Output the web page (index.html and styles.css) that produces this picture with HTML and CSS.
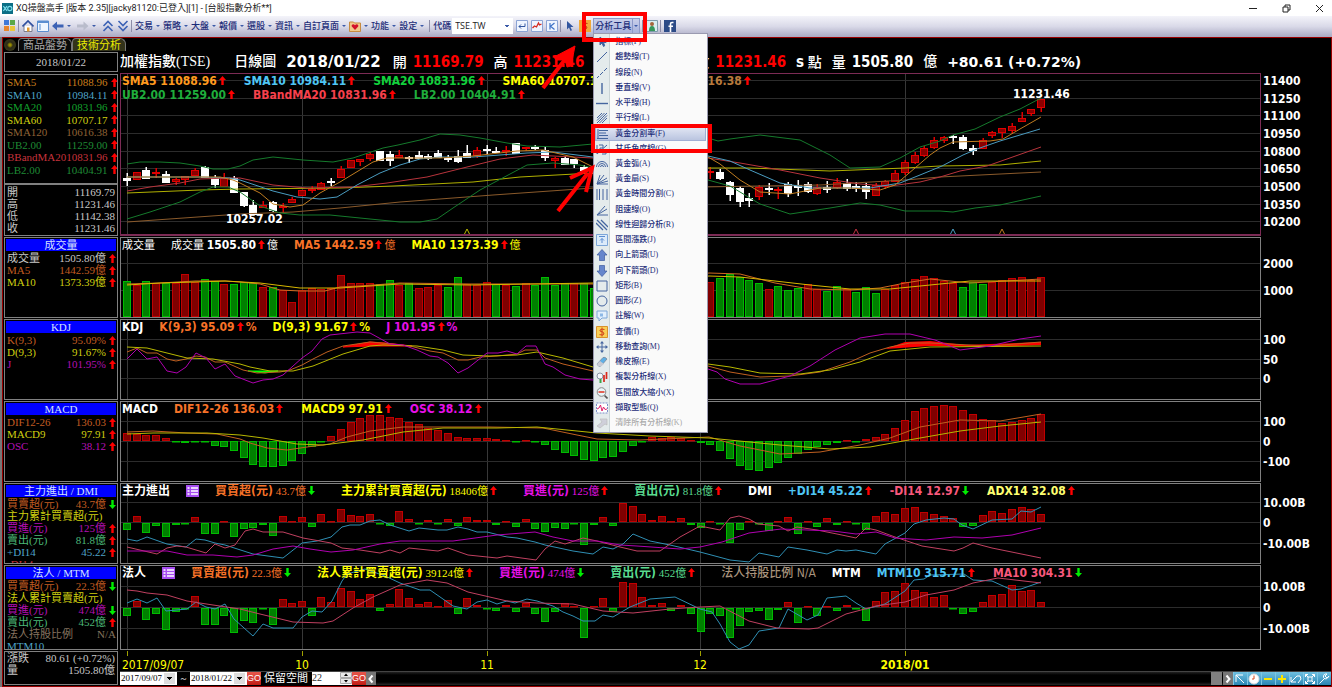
FILE: index.html
```html
<!DOCTYPE html>
<html lang="zh-Hant">
<head>
<meta charset="utf-8">
<title>XQ操盤高手</title>
<link rel="stylesheet" href="styles.css">
</head>
<body>
<svg class="defs" aria-hidden="true">
  <symbol id="up" viewBox="0 0 7 9"><path d="M3.500 0L7 4H4.700V9H2.300V4H0Z" fill="#f00"/></symbol>
  <symbol id="down" viewBox="0 0 7 9"><path d="M3.500 9L7 5H4.700V0H2.300V5H0Z" fill="#0e0"/></symbol>
  <symbol id="list" viewBox="0 0 13 12"><rect width="13" height="12" fill="#a64df0"/><path d="M1.500 3h2M1.500 6h2M1.500 9h2M5 3h7M5 6h7M5 9h7" stroke="#fff" stroke-width="1.300"/></symbol>
</svg>

<header class="titlebar">
  <svg class="logo" viewBox="0 0 12 12"><rect width="12" height="12" fill="#0c6f86"/><path d="M1.500 3.500l4 5m0-5l-4 5" stroke="#7fe0ee" stroke-width="1.200"/><circle cx="8.500" cy="6" r="2.300" fill="none" stroke="#7fe0ee" stroke-width="1.200"/></svg>
  <h1>XQ操盤高手 [版本 2.35][jacky81120:已登入][1] - [台股指數分析**]</h1>
  <div class="window-buttons">
    <button aria-label="最小化"><svg viewBox="0 0 9 9"><path d="M0 4.500h8"/></svg></button>
    <button aria-label="還原"><svg viewBox="0 0 9 9"><path d="M1 3h5v5H1zM3 3V1h5v5H6"/></svg></button>
    <button aria-label="關閉"><svg viewBox="0 0 9 9"><path d="M1 1l7 7M8 1L1 8"/></svg></button>
  </div>
</header>

<nav class="toolbar">
  <button aria-label="版面"><svg viewBox="0 0 12 12"><path fill="#3f78d8" d="M0 0h5v5H0z"/><path fill="#5aa84a" d="M6 0h5v5H6z"/><path fill="#e8842c" d="M0 6h5v5H0z"/><path fill="#e9c63c" d="M6 6h5v5H6z"/></svg></button>
  <i class="sep"></i>
  <button aria-label="首頁"><svg viewBox="0 0 12 12"><path d="M2 6v5.500h8V6" fill="#fff" stroke="#7b7b8c"/><path d="M.5 6.500L6 1l5.500 5.500" fill="none" stroke="#2f4f9f" stroke-width="1.700"/><path d="M5 7.500h2.500v4H5z" fill="#e59a2d"/></svg></button>
  <button class="gap-left" aria-label="頁面"><svg viewBox="0 0 12 12"><path d="M.5 1h11v10.500H.5z" fill="#eef6ff" stroke="#5b8ed0"/><path d="M.5 1h11v2H.5z" fill="#5b8ed0"/><path d="M2 5h2M2 7h2M2 9h2" stroke="#5b8ed0"/></svg></button>
  <button class="gap-left" aria-label="上一頁"><svg viewBox="0 0 12 12"><path d="M0 6l5-4.500V4.500h6.500v3H5v3z" fill="#3d62b5"/></svg><i class="caret"></i></button>
  <button class="gap-left" aria-label="下一頁"><svg viewBox="0 0 12 12"><path d="M11.500 6l-5-4.500V4.500H0v3h6.500v3z" fill="#b9bccb"/></svg><i class="caret"></i></button>
  <button class="gap-left" aria-label="向上"><svg viewBox="0 0 12 12"><path d="M1.500 6L6 1.500 10.500 6M1.500 11L6 6.500l4.500 4.500" fill="none" stroke="#3d62b5" stroke-width="1.600"/></svg></button>
  <button class="gap-left" aria-label="向下"><svg viewBox="0 0 12 12"><path d="M1.500 1L6 5.500 10.500 1M1.500 6L6 10.500 10.500 6" fill="none" stroke="#3d62b5" stroke-width="1.600"/></svg></button>
  <i class="sep"></i>
  <button>交易<i class="caret"></i></button><button>策略<i class="caret"></i></button><button>大盤<i class="caret"></i></button><button>報價<i class="caret"></i></button><button>選股<i class="caret"></i></button><button>資訊<i class="caret"></i></button><button>自訂頁面<i class="caret"></i></button>
  <button aria-label="最愛"><svg viewBox="0 0 12 12"><path d="M.5 2h4l1 1h6v8.500H.5z" fill="#f0c98a" stroke="#c78b3f"/><path d="M6 10L2.800 6.500c-.8-1.500 1.500-3.300 3.200-1.200C7.700 3.200 10 5 9.200 6.500z" fill="#d3122a"/></svg><i class="caret"></i></button>
  <button>功能<i class="caret"></i></button><button>設定<i class="caret"></i></button>
  <i class="sep"></i>
  <label for="symbol">代碼</label>
  <select id="symbol"><option>TSE.TW</option></select>
  <button class="gap-left" aria-label="輸入"><svg viewBox="0 0 12 12"><path d="M.5 .5h11v11H.5z" fill="#eff5ff" stroke="#8ba3d4"/><path d="M9 3.500v3H3M5 4.500l-2 2 2 2" fill="none" stroke="#31559f"/></svg></button>
  <button class="gap-left" aria-label="走勢"><svg viewBox="0 0 12 12"><path d="M.5 .5h11v11H.5z" fill="#eff5ff" stroke="#8ba3d4"/><path d="M1.500 8l2-2 2 1 2-4 1 2 2-1" fill="none" stroke="#d42a20" stroke-width="1.300"/></svg></button>
  <button class="gap-left" aria-label="K 線"><svg viewBox="0 0 12 12"><path d="M.5 .5h11v11H.5z" fill="#eff5ff" stroke="#8ba3d4"/><path d="M4 3v6.500M8.500 3L4.500 6.300l4 3.200" fill="none" stroke="#3f73c8" stroke-width="1.200"/></svg></button>
  <i class="sep"></i>
  <button aria-label="指標"><svg viewBox="0 0 12 12"><path d="M3 1v8.500l2-2 1.500 3.500 1.500-.7L6.500 7H9.500z" fill="#31559f"/></svg></button>
  <button class="gap-left" aria-label="查價"><svg viewBox="0 0 12 12"><rect width="12" height="12" fill="#f0a83a"/><path d="M8.500 3.500Q3.500 2.500 4 5q4.500 1 4 3-1 1.700-4.500.6M6 1.500v9" fill="none" stroke="#c03a10"/></svg></button>
  <div class="tools">
    <button class="tools-button" aria-haspopup="menu" aria-expanded="true">分析工具<span class="split"><i class="caret"></i></span></button>
    <ul class="menu">
      <li><button><svg viewBox="0 0 12 12"><path d="M4 1v8l2-2 1.500 3.500 1.200-.7L7.500 6.500h2.700z" fill="#31559f"/></svg>指標(P)</button></li>
      <li><button><svg viewBox="0 0 12 12"><path d="M1 11L11 1"/></svg>趨勢線(T)</button></li>
      <li><button><svg viewBox="0 0 12 12"><path d="M1 11l2-2m1-1l3-3m1-1l3-3" /></svg>線段(N)</button></li>
      <li><button><svg viewBox="0 0 12 12"><path d="M6 1v11" stroke-width="1.400"/></svg>垂直線(V)</button></li>
      <li><button><svg viewBox="0 0 12 12"><path d="M0 6.500h12" stroke-width="1.400"/></svg>水平線(H)</button></li>
      <li><button><svg viewBox="0 0 12 12"><path d="M1 6l5-5M1 11L11 1M6 11l5-5M1 8.500L8.500 1M3.500 11L11 3.500"/></svg>平行線(L)</button></li>
      <li class="selected"><button><svg viewBox="0 0 12 12"><path d="M2 1v10M3 2.500h9M3 5h7M3 7.500h9M1 10.500h11"/></svg>黃金分割率(F)</button></li>
      <li><button><svg viewBox="0 0 12 12"><path d="M1 2v9M1 11L11 2M3 2h4v3H4v3h3M6 11h4V8"/></svg>甘氏角度線(G)</button></li>
      <li><button><svg viewBox="0 0 12 12"><path d="M.5 9a5.500 5.500 0 0 1 11 0M2.500 9a3.500 3.500 0 0 1 7 0M4.500 9a1.500 1.500 0 0 1 3 0"/></svg>黃金弧(A)</button></li>
      <li><button><svg viewBox="0 0 12 12"><path d="M1 11L4 2M1 11l7-9M1 11l10-6M1 11h11M1 11l11-3"/></svg>黃金扇(S)</button></li>
      <li><button><svg viewBox="0 0 12 12"><path d="M1 1v11M3.500 1v11M7 1v11M11 1v11"/></svg>黃金時間分割(C)</button></li>
      <li><button><svg viewBox="0 0 12 12"><path d="M1 11l8-9M1 11l10-6M1 11h11"/></svg>阻速線(O)</button></li>
      <li><button><svg viewBox="0 0 12 12"><path d="M0 4l7 7M1 1l10 10M5 1l7 7" stroke-width="1.300"/></svg>線性迴歸分析(R)</button></li>
      <li><button><svg viewBox="0 0 12 12"><path d="M.5 .5h11v11H.5z" fill="#dcebfa" stroke="#7da6d8"/><path d="M3 2.500h6M6 9V4.500M4 6.500l2-2 2 2" stroke="#5a8cd0"/></svg>區間漲跌(J)</button></li>
      <li><button><svg viewBox="0 0 12 12"><path d="M6 .5L11 6H8.500v5.500h-5V6H1z" fill="#6686cc" stroke="#3d5a9e" stroke-width=".7"/></svg>向上箭頭(U)</button></li>
      <li><button><svg viewBox="0 0 12 12"><path d="M6 11.500L11 6H8.500V.5h-5V6H1z" fill="#6686cc" stroke="#3d5a9e" stroke-width=".7"/></svg>向下箭頭(D)</button></li>
      <li><button><svg viewBox="0 0 12 12"><path d="M1 1h10v10H1z"/></svg>矩形(B)</button></li>
      <li><button><svg viewBox="0 0 12 12"><circle cx="6" cy="6" r="5"/></svg>圓形(Z)</button></li>
      <li><button><svg viewBox="0 0 12 12"><path d="M1 1h10v7H6l-3 3V8H1z" fill="#e2effc" stroke="#7da6d8"/><path d="M4 3.500h3v3H4z" fill="#8db8e6" stroke="none"/></svg>註解(W)</button></li>
      <li><button><svg viewBox="0 0 12 12"><path d="M.5 .5h11v11H.5z" fill="#f9cf55" stroke="#d8922c"/><path d="M8.500 3.500Q3.500 2.500 4 5q4.500 1 4 3-1 1.700-4.500.6M6 1.500v9" stroke="#d0401a"/></svg>查價(I)</button></li>
      <li><button><svg viewBox="0 0 12 12"><path d="M6 1v10M1 6h10"/><path d="M6 0l2 2.500H4zM6 12L4 9.500h4zM0 6l2.500-2v4zM12 6L9.500 8V4z" fill="#45659f" stroke="none"/></svg>移動查詢(M)</button></li>
      <li><button><svg viewBox="0 0 12 12"><path d="M1 8l6-6.500q2-1 4 1.500L5 10q-2.500 1.500-4-2z" fill="#5fb0e6" stroke="#7a8798" stroke-width=".8"/><path d="M4 5l4 3-3 2.500Q2 11 1 8z" fill="#c9cbd3" stroke="none"/></svg>橡皮擦(E)</button></li>
      <li><button><svg viewBox="0 0 12 12"><circle cx="4" cy="5" r="3" fill="#f5f7fb" stroke="#8a94a6"/><path d="M3.500 8h2v4h-2z" fill="#3da24a" stroke="none"/><path d="M8 4v7M10.500 1v7" stroke="#d8281c" stroke-width="1.700"/></svg>複製分析線(X)</button></li>
      <li><button><svg viewBox="0 0 12 12"><circle cx="5.500" cy="5" r="4.300" fill="#e7f6fa" stroke="#888"/><path d="M8.500 8.500l3 3" stroke="#555" stroke-width="1.600"/><path d="M2.500 5h6" stroke="#e0301e" stroke-width="1.500"/></svg>區間放大縮小(X)</button></li>
      <li><button><svg viewBox="0 0 12 12"><path d="M.5 1h11v10H.5z" fill="#fff" stroke="#7d8fc8" stroke-dasharray="2 1"/><path d="M1 7l2-1 1.500-3 1.500 6L7.500 5 9 7.500l2-.5" stroke="#e0206a"/></svg>擷取型態(Q)</button></li>
      <li class="disabled"><button disabled><svg viewBox="0 0 12 12"><path d="M1 9l5-4-2-3h7v6L9 7l-5 4z" fill="#cfcfda" stroke="#bbb" stroke-width=".7"/></svg>清除所有分析線(K)</button></li>
    </ul>
  </div>
  <i class="sep"></i>
  <button aria-label="使用者"><svg viewBox="0 0 12 12"><path d="M.5 .5h11v11H.5z" fill="#d9eef0" stroke="#7e9cab"/><circle cx="6" cy="4" r="2" fill="#a5653a"/><path d="M3 11q0-5 3-5t3 5z" fill="#36965a"/></svg></button>
  <i class="sep"></i>
  <button aria-label="Facebook"><svg viewBox="0 0 12 12"><rect width="12" height="12" fill="#2c4b87"/><path d="M9.500 2.500H8Q6.500 2.500 6.500 4v8M4.500 6.300H9" fill="none" stroke="#fff" stroke-width="1.600"/></svg></button>
</nav>

<main class="workspace">
  <div class="tabs">
    <button class="round" aria-label="分頁選單"></button>
    <button class="tab">商品盤勢</button>
    <button class="tab active">技術分析</button>
  </div>

  <section class="side date">2018/01/22</section>
  <header class="quote">
    <span class="name">加權指數(TSE)</span><span class="period">日線圖</span><b class="day">2018/01/22</b>
    <span>開<b class="red">11169.79</b></span><span>高<b class="red">11231.46</b></span><span>低<b class="red">11142.38</b></span><span>收<b class="red">11231.46</b></span>
    <span><b class="flush">s</b> 點</span><span>量<b>1505.80</b></span><span>億</span><b class="change">+80.61 (+0.72%)</b>
  </header>

  <div class="side-stack">
    <section class="side">
      <dl class="averages">
        <div class="c-orange"><dt>SMA5</dt><dd>11088.96<svg><use href="#up"/></svg></dd></div>
        <div class="c-blue"><dt>SMA10</dt><dd>10984.11<svg><use href="#up"/></svg></dd></div>
        <div class="c-green"><dt>SMA20</dt><dd>10831.96<svg><use href="#up"/></svg></dd></div>
        <div class="c-yellow"><dt>SMA60</dt><dd>10707.17<svg><use href="#up"/></svg></dd></div>
        <div class="c-brown"><dt>SMA120</dt><dd>10616.38<svg><use href="#up"/></svg></dd></div>
        <div class="c-forest"><dt>UB2.00</dt><dd>11259.00<svg><use href="#up"/></svg></dd></div>
        <div class="c-crimson"><dt>BBandMA20</dt><dd>10831.96<svg><use href="#up"/></svg></dd></div>
        <div class="c-forest"><dt>LB2.00</dt><dd>10404.91<svg><use href="#up"/></svg></dd></div>
      </dl>
    </section>
    <section class="side">
      <dl class="plain"><div><dt>開</dt><dd>11169.79</dd></div><div><dt>高</dt><dd>11231.46</dd></div><div><dt>低</dt><dd>11142.38</dd></div><div><dt>收</dt><dd>11231.46</dd></div></dl>
    </section>
  </div>
  <figure class="chart price" data-chart="price"><svg class="plot"></svg><figcaption>
    <div><b class="t-orange">SMA5 11088.96<svg><use href="#up"/></svg></b><b class="t-blue">SMA10 10984.11<svg><use href="#up"/></svg></b><b class="t-green">SMA20 10831.96<svg><use href="#up"/></svg></b><b class="t-yellow">SMA60 10707.17<svg><use href="#up"/></svg></b><b class="t-brown">SMA120 10616.38<svg><use href="#up"/></svg></b></div>
    <div><b class="t-forest">UB2.00 11259.00<svg><use href="#up"/></svg></b><b class="t-crimson">BBandMA20 10831.96<svg><use href="#up"/></svg></b><b class="t-forest">LB2.00 10404.91<svg><use href="#up"/></svg></b></div>
  </figcaption><svg class="scale"></svg></figure>

  <section class="side"><h2>成交量</h2>
    <dl><div><dt>成交量</dt><dd>1505.80億<svg><use href="#up"/></svg></dd></div><div class="c-rust"><dt>MA5</dt><dd>1442.59億<svg><use href="#up"/></svg></dd></div><div class="c-yellow"><dt>MA10</dt><dd>1373.39億<svg><use href="#up"/></svg></dd></div></dl>
  </section>
  <figure class="chart" data-chart="volume"><svg class="plot"></svg><figcaption>
    <div><span>成交量</span><span>成交量 <b>1505.80</b><svg><use href="#up"/></svg>億</span><span class="t-rust"><b>MA5 1442.59</b><svg><use href="#up"/></svg>億</span><span class="t-yellow"><b>MA10 1373.39</b><svg><use href="#up"/></svg>億</span></div>
  </figcaption><svg class="scale"></svg></figure>

  <section class="side"><h2>KDJ</h2>
    <dl><div class="c-rust"><dt>K(9,3)</dt><dd>95.09%<svg><use href="#up"/></svg></dd></div><div class="c-yellow"><dt>D(9,3)</dt><dd>91.67%<svg><use href="#up"/></svg></dd></div><div class="c-purple"><dt>J</dt><dd>101.95%<svg><use href="#up"/></svg></dd></div></dl>
  </section>
  <figure class="chart" data-chart="kdj"><svg class="plot"></svg><figcaption>
    <div><b>KDJ</b><b class="t-rust">K(9,3) 95.09<svg><use href="#up"/></svg>%</b><b class="t-yellow">D(9,3) 91.67<svg><use href="#up"/></svg>%</b><b class="t-purple">J 101.95<svg><use href="#up"/></svg>%</b></div>
  </figcaption><svg class="scale"></svg></figure>

  <section class="side"><h2>MACD</h2>
    <dl><div class="c-rust"><dt>DIF12-26</dt><dd>136.03<svg><use href="#up"/></svg></dd></div><div class="c-yellow"><dt>MACD9</dt><dd>97.91<svg><use href="#up"/></svg></dd></div><div class="c-purple"><dt>OSC</dt><dd>38.12<svg><use href="#up"/></svg></dd></div></dl>
  </section>
  <figure class="chart" data-chart="macd"><svg class="plot"></svg><figcaption>
    <div><b>MACD</b><b class="t-rust">DIF12-26 136.03<svg><use href="#up"/></svg></b><b class="t-yellow">MACD9 97.91<svg><use href="#up"/></svg></b><b class="t-purple">OSC 38.12<svg><use href="#up"/></svg></b></div>
  </figcaption><svg class="scale"></svg></figure>

  <section class="side"><h2>主力進出 / DMI</h2>
    <dl><div class="c-rust"><dt>買賣超(元)</dt><dd>43.7億<svg><use href="#down"/></svg></dd></div><div class="c-yellow"><dt>主力累計買賣超(元)</dt></div><div class="c-purple"><dt>買進(元)</dt><dd>125億<svg><use href="#up"/></svg></dd></div><div class="c-mint"><dt>賣出(元)</dt><dd>81.8億<svg><use href="#up"/></svg></dd></div><div class="c-blue"><dt>+DI14</dt><dd>45.22<svg><use href="#up"/></svg></dd></div><div class="c-crimson"><dt>-DI14</dt></div></dl>
  </section>
  <figure class="chart cjk" data-chart="dmi"><svg class="plot"></svg><figcaption>
    <div><b>主力進出</b><svg class="list"><use href="#list"/></svg><span class="t-rust"><b>買賣超(元)</b> 43.7億<svg><use href="#down"/></svg></span><span class="t-yellow wide"><b>主力累計買賣超(元)</b> 18406億<svg><use href="#up"/></svg></span><span class="t-purple wide"><b>買進(元)</b> 125億<svg><use href="#up"/></svg></span><span class="t-mint wide"><b>賣出(元)</b> 81.8億<svg><use href="#up"/></svg></span><b class="wide">DMI</b><b class="t-blue">+DI14 45.22<svg><use href="#up"/></svg></b><b class="t-pink">-DI14 12.97<svg><use href="#down"/></svg></b><b class="t-lemon">ADX14 32.08<svg><use href="#up"/></svg></b></div>
  </figcaption><svg class="scale"></svg></figure>

  <section class="side"><h2>法人 / MTM</h2>
    <dl><div class="c-rust"><dt>買賣超(元)</dt><dd>22.3億<svg><use href="#down"/></svg></dd></div><div class="c-yellow"><dt>法人累計買賣超(元)</dt></div><div class="c-purple"><dt>買進(元)</dt><dd>474億<svg><use href="#down"/></svg></dd></div><div class="c-mint"><dt>賣出(元)</dt><dd>452億<svg><use href="#up"/></svg></dd></div><div class="c-tan"><dt>法人持股比例</dt><dd>N/A</dd></div><div class="c-blue"><dt>MTM10</dt></div></dl>
  </section>
  <figure class="chart cjk tall" data-chart="mtm"><svg class="plot"></svg><figcaption>
    <div><b>法人</b><svg class="list"><use href="#list"/></svg><span class="t-rust"><b>買賣超(元)</b> 22.3億<svg><use href="#down"/></svg></span><span class="t-yellow wide"><b>法人累計買賣超(元)</b> 39124億<svg><use href="#up"/></svg></span><span class="t-purple wide"><b>買進(元)</b> 474億<svg><use href="#down"/></svg></span><span class="t-mint wide"><b>賣出(元)</b> 452億<svg><use href="#up"/></svg></span><b class="t-tan wide">法人持股比例 N/A</b><b>MTM</b><b class="t-blue">MTM10 315.71<svg><use href="#up"/></svg></b><b class="t-pink">MA10 304.31<svg><use href="#down"/></svg></b></div>
  </figcaption><svg class="scale"></svg></figure>

  <section class="side last"><dl class="plain"><div><dt>漲跌</dt><dd>80.61 (+0.72%)</dd></div><div><dt>量</dt><dd>1505.80億</dd></div></dl></section>
  <footer class="foot">
    <svg class="dates"></svg>
    <form class="range">
      <select aria-label="起始日期"><option>2017/09/07</option></select><span class="tilde">~</span><select aria-label="結束日期"><option>2018/01/22</option></select><button type="button" class="go">GO</button>
      <label for="room">保留空間</label><span class="spin"><input id="room" value="22"><svg viewBox="0 0 12 12"><path d="M.5 .5h11v5H.5zM.5 6.500h11v5H.5z" fill="#e8e8e8" stroke="#aaa"/><path d="M6 1.500L8 4H4zM6 10.500L8 8H4z" fill="#000"/></svg></span><button type="button" class="go">GO</button>
      <button type="button" class="step" aria-label="向左捲動"><svg viewBox="0 0 10 12"><path d="M6.500 2.500L3.500 6l3 3.500"/></svg></button>
      <span class="track"><i></i></span>
      <button type="button" class="step" aria-label="向右捲動"><svg viewBox="0 0 10 12"><path d="M3.500 2.500l3 3.500-3 3.500"/></svg></button>
      <button type="button" class="blue" aria-label="選取"><svg viewBox="0 0 12 12"><path d="M2 9V2h7M2 2l8 8"/></svg></button>
      <button type="button" class="blue" aria-label="時間"><svg viewBox="0 0 12 12"><circle cx="6" cy="6" r="5" fill="#fff" stroke="#ddd"/><path d="M6 2.500V6H4" stroke="#d64a1c"/></svg></button>
      <button type="button" class="blue gold" aria-label="縮小"><svg viewBox="0 0 12 12"><path d="M2 6h8"/></svg></button>
      <button type="button" class="blue gold" aria-label="放大"><svg viewBox="0 0 12 12"><path d="M2 6h8M6 2v8"/></svg></button>
      <button type="button" class="blue" aria-label="復原"><svg viewBox="0 0 12 12"><path d="M1 4v5h5M1 9l6-6h3l1 3-3 4"/></svg></button>
      <button type="button" class="blue" aria-label="全螢幕"><svg viewBox="0 0 12 12"><path d="M4 4h4v4H4zM1.500 1.500L4 4M10.500 1.500L8 4M1.500 10.500L4 8M10.500 10.500L8 8M1.500 4V1.500H4M8 1.500h2.500V4M10.500 8v2.500H8M4 10.500H1.500V8"/></svg></button>
      <button type="button" class="blue" aria-label="設定"><svg viewBox="0 0 12 12"><path d="M1.500 10.500L7 5M11 3L9 5 7 3l2-2q-4-.5-3.500 3.500Q8 8 11 3z"/></svg></button>
    </form>
  </footer>
</main>

<svg class="marks" aria-hidden="true">
  <rect x="584" y="14" width="61" height="26"/>
  <rect x="593" y="126" width="117" height="25"/>
  <path d="M543 88L567 57"/><path class="head" d="M575 46L554 57L556 60L562 60L566 63L567 67L571 66Z"/>
  <path d="M558 211L588 173"/><path d="M570 178L592 168L586 192"/>
</svg>
<script src="charts.js"></script>
</body>
</html>
```
FILE: styles.css
```css
* { box-sizing: border-box; }
body { margin: 0; min-height: 100vh; background: #000; color: #fff; font-family: "Liberation Serif", "Noto Sans CJK TC", serif; font-size: 11px; display: flex; flex-direction: column; overflow-x: hidden; }
button, select, input { font: inherit; color: inherit; margin: 0; padding: 0; border: 0; background: none; border-radius: 0; }
h1, h2, dl, dd, ul, figure { margin: 0; padding: 0; font-weight: normal; }
.defs { position: absolute; width: 0; height: 0; }

.titlebar { height: 16px; background: #fff; color: #222; display: flex; align-items: center; padding: 0 8px 0 2px; gap: 3px; }
.titlebar h1 { font: 9px/16px Roboto, "Noto Sans CJK TC", sans-serif; }
.logo { width: 11px; height: 11px; }
.window-buttons { margin-left: auto; display: flex; gap: 24px; }
.window-buttons button { display: flex; }
.window-buttons svg { width: 9px; height: 9px; fill: none; stroke: #222; }

.toolbar { height: 21px; background: linear-gradient(#f4f4fa, #d9d9e8 50%, #a9a9c2); color: #1c2c78; font: 500 9px/12px "Liberation Sans", "Noto Sans CJK TC", sans-serif; display: flex; align-items: center; padding: 0 4px 2px; white-space: nowrap; }
.toolbar > button { display: flex; align-items: center; }
.toolbar > button > svg { width: 12px; height: 12px; }
.toolbar .gap-left { margin-left: 3px; }
.caret { width: 0; height: 0; border: 2px solid transparent; border-top-color: #3b5aa8; border-bottom: 0; margin: 0 3px; }
.sep { width: 1px; height: 12px; background: #8d8da8; margin: 0 3px 0 2px; }
#symbol { width: 61px; height: 16px; margin-left: 1px; padding-left: 3px; background: #fff; color: #222; font: 9px/16px "Open Sans", sans-serif; appearance: none; background-image: linear-gradient(45deg, transparent 50%, #3b5aa8 50%), linear-gradient(-45deg, transparent 50%, #3b5aa8 50%); background-size: 2px 2px; background-position: 53px 7px, 55px 7px; background-repeat: no-repeat; }
.tools { position: relative; margin-left: 2px; }
.tools-button { display: flex; align-items: center; height: 16px; padding-left: 1px; background: linear-gradient(#c9cfea, #a7b2dc); border: 1px solid #8c99c9; }
.split { border-left: 1px solid #8c99c9; height: 14px; display: flex; align-items: center; margin-left: 1px; }
.split .caret { margin: 0 1px; }
.menu { position: absolute; z-index: 3; left: 0; top: 15px; width: 115px; height: 400px; padding: 1px; display: flex; flex-direction: column; list-style: none; background: linear-gradient(90deg, #e4ebec 15px, #c9d3d6 15px 16px, #fafafa 16px); border: 1px solid #9a9ab0; font: 500 8px/12px "Liberation Serif", "Noto Sans CJK TC", serif; }
.menu li { flex: 1; display: flex; }
.menu button { display: flex; align-items: center; gap: 7px; width: 100%; padding-left: 1px; color: #1c2c78; }
.menu svg { width: 12px; height: 12px; fill: none; stroke: #45659f; }
.menu .selected { background: linear-gradient(#e6eaf6, #b7c2de); outline: 1px solid #a0aed4; outline-offset: -1px; }
.menu .disabled button { color: #aaa; }

.workspace { flex: 1; display: grid; grid-template-columns: 114px minmax(0, 1fr); gap: 1px 2px; grid-auto-rows: auto; align-content: start; border: 1px solid #900; border-left-width: 1px; margin-left: 2px; padding-left: 1px; box-shadow: -2px 0 #777; }
.tabs { grid-column: 1 / -1; display: flex; align-items: end; height: 13px; }
.round { width: 12px; height: 12px; border-radius: 50%; background: radial-gradient(circle, #998e00 1px, #2c2b18 3px, #45441c); }
.tab { height: 13px; line-height: 13px; padding: 0 4px; margin-left: 2px; color: #aaa; border: 1px solid #777; border-width: 1px 1px 0; border-radius: 4px 6px 0 0; font-size: 11px; background: #0a0a0a; }
.tab.active { color: #ee0; background: #33331a; margin-left: 0; padding: 0 4px; }

.side { border: 1px solid #808080; overflow: hidden; height: 0; min-height: 100%; padding: 1px 1px 0; color: #c8c8c8; }
.side h2 { margin: 0; background: #00f; color: #d4e0ff; font-size: 11px; line-height: 12px; text-align: center; }
.side dl div { display: flex; justify-content: space-between; line-height: 12px; padding-left: 1px; white-space: nowrap; }
.side h2 + dl { padding-top: 1px; }
.side dt { flex: none; }
.side dd { display: flex; align-items: center; gap: 3px; }
.side dd svg { width: 7px; height: 9px; }
.side .averages { display: grid; grid-auto-rows: 1fr; height: 100px; }
.plain div { padding-right: 1px; }
.date { line-height: 18px; text-align: center; padding: 0; }
.side-stack { display: grid; grid-template-rows: 110px 1fr; padding-top: 1px; min-height: 0; }
.last { padding: 0 1px; }

.quote { height: 20px; display: flex; align-items: center; gap: 10px; font: 500 14px/20px "Liberation Serif", "Noto Sans CJK TC", serif; white-space: nowrap; overflow: hidden; }
.quote b { font: bold 15px/20px "DejaVu Sans Condensed", "DejaVu Sans", sans-serif; }
.quote span b { margin-left: 6px; }
.quote span .flush { margin-left: 0; }
.quote .period { margin-left: 14px; }
.quote .day { font: bold 15px/20px "DejaVu Sans", sans-serif; margin-right: 2px; }
.quote .change { font: bold 14px/20px "DejaVu Sans", sans-serif; }
.red { color: #f00; }

.chart { display: grid; grid-template-columns: minmax(0, 1fr) 70px; }
.plot { grid-area: 1 / 1; width: 100%; height: 81px; border: 1px solid #808080; overflow: hidden; }
.scale { grid-area: 1 / 2; width: 70px; height: 81px; overflow: visible; }
.price .plot, .price .scale { height: 163px; }
.price .plot { border-color: #7c2b55; border-bottom-width: 2px; }
.tall .plot, .tall .scale { height: 85px; }
.plot text, .scale text, .dates text { font: bold 12px "DejaVu Sans Condensed", "DejaVu Sans", sans-serif; fill: #fff; }
.chart figcaption { grid-area: 1 / 1; z-index: 1; padding: 1px 2px; min-width: 0; overflow: hidden; white-space: nowrap; font: 11px/14px "Liberation Serif", "Noto Sans CJK TC", serif; }
figcaption div { display: flex; align-items: center; gap: 16px; }
figcaption b { font: bold 12px/14px "DejaVu Sans Condensed", "DejaVu Sans", "Noto Sans CJK TC", sans-serif; }
figcaption svg { width: 7px; height: 9px; margin: 0 2px 0 2px; }
figcaption .list { width: 13px; height: 12px; margin: 0; flex: none; }
.wide { margin-left: 8px; }
.cjk figcaption b { font-family: "DejaVu Sans Condensed", "Noto Sans CJK TC", sans-serif; }

.c-orange { color: #c87d1c; } .c-blue { color: #4fa4c8; } .c-green { color: #12a02c; } .c-yellow { color: #cfcf10; } .c-brown { color: #8f6235; }
.c-forest { color: #1f8a35; } .c-crimson { color: #c8333c; } .c-rust { color: #c05c20; } .c-purple { color: #b410b4; } .c-mint { color: #4cb878; } .c-tan { color: #85735f; }
.t-orange { color: #ff9a1f; } .t-blue { color: #4fc6f5; } .t-green { color: #12d03c; } .t-yellow { color: #ff0; } .t-brown { color: #b87a3c; }
.t-forest { color: #1fae3c; } .t-crimson { color: #f8404c; } .t-rust { color: #f87328; } .t-purple { color: #e810e8; } .t-mint { color: #5adc90; } .t-pink { color: #f8587c; } .t-lemon { color: #ffff70; } .t-tan { color: #a8937c; }
figcaption b.t-tan { font-weight: 500; }

.foot { display: flex; flex-direction: column; min-width: 0; }
.dates { width: 100%; height: 20px; }
.dates text { fill: #ff0; }
.dates .thin { font-weight: normal; }
.range { display: flex; align-items: stretch; height: 14px; border-top: 1px solid #444; }
.range select { width: 57px; background: #fff; color: #000; font: 9px/13px "Liberation Serif", serif; padding-left: 1px; appearance: none; background-image: linear-gradient(#000, #000), linear-gradient(#000, #000), linear-gradient(#000, #000), linear-gradient(#ddd, #ddd); background-repeat: no-repeat; background-size: 5px 1px, 3px 1px, 1px 1px, 11px 11px; background-position: 47px 5px, 48px 6px, 49px 7px, 44px 1px; }
.range .tilde { width: 13px; text-align: center; line-height: 13px; }
.range label { padding: 0 4px 0 3px; line-height: 13px; }
.go { width: 14px; background: linear-gradient(#e8584c, #c01c14); color: #fff; font: 9px/13px "Liberation Sans", sans-serif; }
.spin { display: flex; background: #fff; width: 40px; }
.spin input { width: 28px; color: #333; font: 10px/10px "Liberation Serif", serif; align-self: start; height: 10px; }
.spin svg { width: 12px; height: 12px; }
.step { width: 10px; background: #777; display: flex; align-items: center; }
.step svg { width: 10px; height: 12px; fill: none; stroke: #fff; stroke-width: 2; }
.track { flex: 1; display: flex; justify-content: flex-end; background: linear-gradient(#222, #000 3px 10px, #2a2a2a); }
.track i { width: 11px; background: #808080; margin-right: 1px; }
.blue { width: 14px; background: linear-gradient(#6fc0e0, #2a86b4); border-left: 1px solid #7cc6e4; display: flex; align-items: center; }
.blue svg { width: 12px; height: 12px; fill: none; stroke: #fff; }
.gold svg { stroke: #ffe600; stroke-width: 2; }

.marks { position: absolute; z-index: 5; left: 0; top: 0; width: 720px; height: 220px; pointer-events: none; fill: none; stroke: #f00; stroke-width: 4; }
.marks .head { fill: #f00; stroke-width: 1; }
```
FILE: charts.js
```js
const NS = 'http://www.w3.org/2000/svg';
const LEFT = 121, FIRST = 127, STEP = 9.723;
const MONTHS = [127, 302, 487, 700, 905];
const xAt = i => Math.round(FIRST + i * STEP);

function add(parent, tag, attrs, text) {
  const el = document.createElementNS(NS, tag);
  for (const k in attrs) el.setAttribute(k, attrs[k]);
  if (text !== undefined) el.textContent = text;
  parent.appendChild(el);
  return el;
}

function line(g, points, color, extra) {
  add(g, 'polyline', Object.assign({ points, fill: 'none', stroke: color, 'stroke-width': 1 }, extra));
}

function bar(g, i, top, bottom, up) {
  const h = Math.max(1, bottom - top);
  add(g, 'rect', { x: xAt(i) - 3.5, y: top + 0.5, width: 7, height: Math.max(0.5, h - 1), fill: up ? '#800000' : '#008000', stroke: up ? '#c00000' : '#00bb00' });
}

// Candles: colour (r/w), high, body top, body bottom, low
const candles = `w173,178,180,185 r172,172,179,179 w167,170,178,178 r168,172,173,177 w171,174,182,182 r178,179,181,184 r176,176,179,184 r168,170,175,175 w166,167,177,177 w175,178,184,187 r173,178,186,186 w176,178,192,192
w192,192,205,206 w200,205,214,214 r201,205,207,207 w201,202,210,211 r203,206,207,212 r197,199,202,202 r190,190,195,195 r186,189,190,192 r182,183,189,189 w178,181,182,185 r166,169,177,177 r160,160,167,167 r159,159,161,165 r152,154,158,160 w151,151,160,160 w151,154,160,165 r150,155,157,157 w156,157,158,162 w151,155,158,158 w154,156,158,159 w150,153,157,157 w155,158,159,161 w150,156,161,162 w145,153,157,157 r147,150,155,157 w145,149,150,153 w147,151,152,152 r146,150,151,155 w143,143,153,153 r147,147,148,150 w145,147,148,149 w147,150,157,160 r157,158,160,167 w156,158,164,164 w159,159,163,167 w165,167,170,170 w169,170,173,173
w170,172,176,178 r168,170,174,176 r164,166,170,172 r160,162,166,168 w160,162,166,168 r156,158,162,164 w156,158,162,164 r154,156,160,162 w154,156,158,160 w156,158,164,166 w160,162,170,172 r167,171,172,178 w169,172,178,179 w181,182,194,200 w186,188,201,206 w193,198,200,206 r185,187,196,199 w183,188,189,194 r187,189,190,198 w182,184,193,196 w180,185,187,195 w182,184,191,192 r184,187,193,194 w181,187,189,192 r178,182,187,188 w179,183,188,190 w182,186,188,191 w183,186,191,198 r183,185,195,195 r180,181,186,188 r170,173,181,181 r160,162,172,174 r152,155,162,163 r146,148,155,156 r137,140,147,148 r136,137,140,142 w135,136,137,143 w135,137,148,149 w145,148,150,154 r138,140,148,148 r131,132,135,137 r128,128,132,137 r123,126,130,133 r112,118,121,121 r109,109,113,115 r99,99,107,111`.split(/\s+/);

const volumeTop = [281,285,281,283,283,283,274,282,279,281,284,284,282,283,287,287,290,302,290,288,289,288,275,283,283,283,284,280,285,283,288,287,285,287,277,284,285,282,284,285,286,283,285,277,285,283,283,283,288,284,283,285,282,284,280,283,285,284,283,282,282,278,274,277,280,283,289,286,290,288,284,289,291,286,289,292,287,293,289,285,282,279,276,278,281,283,287,282,284,282,280,278,277,280,277];
const volumeKind = 'grgrgrrrggrgggrgrrrrrrrrrrggrgrrrggrrrgrgrggggrggrgrgrggrrgrrgggggrgggrrggrgggrrrrrrrrgggrrrrrr';
const macdEnd = [433,434,435,435,438,442,443,442,442,446,447,451,458,465,467,467,466,461,454,447,442,436,429,422,418,415,415,417,418,422,424,428,430,433,437,438,438,438,439,440,442,440,442,445,450,453,456,460,461,458,457,452,446,442,437,438,437,438,440,443,445,451,459,466,470,471,468,463,458,454,450,447,445,443,440,442,439,437,434,428,420,411,408,406,405,406,410,414,419,420,423,422,420,418,414];
const dmiEnd = [531,517,534,527,538,526,525,518,535,535,522,538,530,529,526,537,517,522,518,528,515,522,510,516,517,515,525,527,512,520,525,521,525,520,527,518,521,521,526,522,528,520,530,533,529,530,525,546,526,518,527,504,507,515,521,517,522,519,526,529,522,525,544,531,522,525,532,522,518,535,522,528,519,526,522,525,531,517,513,515,509,508,513,515,517,519,528,527,516,512,514,510,508,510,515];
const mtmEnd = [617,602,621,615,631,613,610,597,626,626,617,634,622,624,610,626,600,604,602,617,598,603,589,592,600,595,612,605,590,599,605,603,607,601,615,599,606,610,612,606,613,604,615,623,613,604,607,639,607,599,613,583,584,598,606,604,612,606,615,633,615,617,639,627,613,612,621,611,603,624,607,617,607,612,606,610,622,602,593,592,584,591,593,598,596,610,615,613,603,596,595,586,592,591,603];

const charts = {
  price: {
    top: 73, height: 163,
    scale: [['11400', 80], ['11250', 98], ['11100', 115], ['10950', 133], ['10800', 151], ['10650', 168], ['10500', 186], ['10350', 204], ['10200', 221]],
    draw(g) {
      candles.forEach((c, i) => {
        const [hi, a, b, lo] = c.slice(1).split(',').map(Number);
        const red = c[0] === 'r', x = xAt(i);
        add(g, 'rect', { x: x - 0.5, y: hi, width: 1.5, height: lo - hi + 1, fill: red ? '#e00000' : '#fff' });
        add(g, 'rect', { x: x - 3.5, y: a + 0.5, width: 7, height: Math.max(0.6, b - a), fill: red ? '#8b0000' : '#fff', stroke: red ? '#e00000' : '#fff' });
      });
      line(g, '127,222 240,214 293,212 340,208 400,202 493,195 593,188 700,187 820,185 905,180 940,177 1041,172', '#8a5a2b');
      line(g, '127,193 200,190 240,189 340,188 393,186 473,182 520,177 593,173 708,168 750,168 830,171 905,168 940,166 1000,165 1041,161', '#b0b000');
      line(g, '127,164 140,162 160,162 180,163 200,166 213,169 228,169 240,166 253,160 273,157 303,160 333,162 353,158 383,148 398,145 420,140 440,134 460,135 480,138 507,143 527,146 560,147 593,144 650,135 708,138 718,141 730,139 760,135 800,140 830,155 850,168 880,167 900,158 920,147 940,141 953,135 975,129 1000,117 1020,109 1041,98', '#157a2c');
      line(g, '127,219 150,212 180,202 200,192 213,187 228,187 240,192 260,206 280,213 300,215 330,215 380,220 400,222 420,222 437,219 453,208 480,190 527,165 553,163 580,165 593,168 650,180 708,180 730,186 760,204 790,214 830,208 860,203 880,205 905,211 940,211 953,212 975,208 1000,205 1041,196', '#157a2c');
      line(g, '127,191 150,187 180,183 200,179 230,178 240,178 273,185 307,188 353,187 387,183 427,177 467,167 500,159 533,155 593,158 640,160 708,158 740,163 780,170 820,178 860,184 890,186 920,182 940,177 960,171 987,166 1007,159 1041,147', '#b8343c');
      line(g, '127,177 200,177 230,178 240,180 273,191 297,197 320,199 337,197 357,185 380,173 400,165 420,159 440,157 473,157 527,153 553,152 593,157 650,160 708,156 730,161 750,170 780,183 810,188 840,188 870,188 900,183 920,175 942,166 963,155 977,149 1000,141 1040,129', '#4a9cc0');
      line(g, '127,177 220,177 233,180 240,183 260,193 273,204 290,207 303,205 320,193 340,182 373,162 387,158 440,158 473,156 517,151 543,150 573,157 593,167 640,172 708,157 720,164 740,180 760,192 790,194 820,188 850,188 880,190 895,185 915,168 930,155 940,148 953,142 990,141 1003,139 1020,129 1041,117', '#c07d20');
      [[467, '#b8b800'], [856, '#c03040'], [953, '#4a9cc0'], [1002, '#c07d20']].forEach(([x, c]) => line(g, `${x - 3},235 ${x},229 ${x + 3},235`, c));
      add(g, 'text', { x: 226, y: 223 }, '10257.02');
      add(g, 'text', { x: 1013, y: 98 }, '11231.46');
    }
  },
  volume: {
    top: 237, height: 81, scale: [['2000', 263], ['1000', 290]],
    draw(g) {
      volumeTop.forEach((y, i) => bar(g, i, y, 317, volumeKind[i] === 'r'));
      line(g, '127,284 160,283 195,281 225,281 240,282 260,284 280,290 300,291 325,291 340,287 360,286 400,283 470,284 530,284 593,284 650,283 709,273 740,274 775,283 810,289 850,290 880,288 905,283 930,279 970,283 1041,279', '#d06a20');
      line(g, '127,285 160,283 195,282 225,281 260,283 300,288 340,288 400,284 470,285 530,284 593,283 650,282 709,276 740,277 775,281 810,285 850,289 890,289 930,285 970,281 1041,281', '#d8b800');
    }
  },
  kdj: {
    top: 319, height: 81, scale: [['100', 339], ['50', 359], ['0', 378]],
    draw(g) {
      add(g, 'polygon', { points: '343,347 370,342 385,343 412,346 370,346', fill: '#f00', stroke: '#f00' });
      add(g, 'polygon', { points: '885,349 905,342 930,341 965,345 990,344 1041,342 1041,345 990,347 930,346', fill: '#f00' });
      add(g, 'polygon', { points: '248,371 278,371 265,373', fill: '#0f0', stroke: '#0f0' });
      line(g, '127,352 137,348 147,353 157,353 167,359 176,361 186,359 196,356 205,357 215,362 225,362 243,370 257,373 280,372 290,370 302,365 313,359 327,352 343,346 370,342 393,344 410,346 430,351 443,353 458,360 468,360 480,357 497,356 517,354 525,350 537,350 545,358 563,364 593,371 650,370 708,366 730,372 760,377 790,376 820,372 850,362 870,353 890,347 910,343 930,343 990,346 1041,342', '#c06020');
      line(g, '127,347 147,348 167,353 187,358 213,359 240,364 250,367 270,371 293,371 313,366 343,354 370,346 383,345 417,346 443,350 463,355 490,356 517,355 537,352 563,358 593,367 650,368 708,364 730,367 760,373 800,374 830,370 860,362 890,351 930,347 1041,346', '#b8b800');
      line(g, '127,359 137,349 147,359 157,357 167,371 177,373 186,367 196,353 206,358 215,369 225,364 235,376 253,383 263,380 273,379 283,375 302,358 312,351 322,339 330,335 357,332 370,333 390,344 403,345 417,350 430,356 438,357 448,363 458,373 468,368 487,353 498,353 507,351 517,354 526,346 536,346 545,364 553,367 565,375 580,379 593,380 650,374 708,369 717,372 725,379 740,384 760,384 790,376 810,366 835,350 860,338 885,334 910,334 935,340 960,350 990,346 1020,339 1041,336', '#b000b0');
    }
  },
  macd: {
    top: 401, height: 82, scale: [['100', 421], ['0', 441], ['-100', 461]],
    draw(g) {
      macdEnd.forEach((y, i) => y < 441 ? bar(g, i, y, 441, true) : bar(g, i, 441, y, false));
      line(g, '127,432 153,431 187,433 217,434 240,439 250,443 267,448 287,450 307,447 330,444 347,437 370,431 403,427 443,427 490,427 543,428 577,435 597,439 640,440 709,437 740,446 780,454 820,452 860,445 890,438 920,427 960,420 1000,421 1041,414', '#c06020');
      line(g, '127,434 153,433 207,433 240,435 263,438 297,444 323,445 363,440 403,432 443,428 497,428 537,427 577,431 597,433 650,436 709,438 780,445 830,449 870,447 920,438 960,431 1000,426 1041,422', '#b8b800');
    }
  },
  dmi: {
    top: 484, height: 81, scale: [['10.00B', 503], ['0', 523], ['-10.00B', 544]],
    draw(g) {
      dmiEnd.forEach((y, i) => y < 523.5 ? bar(g, i, y, 523, true) : bar(g, i, 524, y, false));
      line(g, '127,540 137,542 147,538 167,545 186,548 196,540 205,541 215,544 225,546 253,555 283,559 302,544 317,542 331,538 342,528 350,526 360,526 370,522 380,521 390,526 409,532 419,529 438,531 447,531 458,528 468,530 477,533 487,533 507,538 517,539 535,543 545,546 573,552 593,555 603,548 613,550 623,545 633,535 650,542 670,546 700,553 730,561 749,563 759,554 779,558 788,548 807,551 827,555 837,551 846,552 856,551 876,555 885,545 905,534 914,525 926,521 944,519 954,520 962,526 973,530 992,521 1012,520 1021,512 1031,513 1041,508', '#2f8fb4');
      line(g, '127,548 157,555 167,549 177,547 186,548 206,554 215,545 225,549 235,546 245,532 253,530 263,533 283,533 303,539 331,544 342,549 360,551 380,554 390,551 400,554 409,549 428,551 438,552 448,549 468,556 497,559 507,557 536,561 545,550 555,542 565,545 583,539 597,542 620,548 637,552 660,552 680,538 700,527 710,529 720,531 730,519 739,517 749,520 758,525 779,527 788,532 797,528 817,531 837,535 856,539 866,529 876,531 895,538 922,547 954,552 963,549 973,544 992,549 1041,559', '#c04060');
      line(g, '127,552 167,552 187,556 213,556 237,558 253,556 273,550 293,547 310,550 331,553 353,551 380,545 400,542 453,542 497,536 535,533 553,538 573,542 597,542 620,546 637,547 680,550 700,548 722,543 749,534 781,530 833,532 856,535 876,533 895,539 926,541 954,538 982,539 1012,536 1041,529', '#b000b0');
    }
  },
  mtm: {
    top: 566, height: 85, scale: [['10.00B', 587], ['0', 608], ['-10.00B', 629]],
    draw(g) {
      mtmEnd.forEach((y, i) => y < 608.5 ? bar(g, i, y, 608, true) : bar(g, i, 609, y, false));
      line(g, '127,604 137,600 147,604 157,599 166,612 187,610 196,603 206,608 215,610 225,605 234,620 253,637 263,625 273,629 293,629 302,618 312,612 322,613 332,602 342,582 347,575 365,570 385,577 400,584 420,591 430,591 453,607 467,610 477,603 487,601 497,605 507,602 515,604 527,600 537,602 553,607 563,613 573,617 583,622 595,622 603,616 613,618 630,608 650,600 675,598 700,610 712,613 720,625 730,643 739,650 749,646 759,632 779,629 788,610 807,621 818,616 827,599 846,597 856,604 866,610 885,605 905,592 914,581 924,580 930,576 964,575 973,581 992,582 1012,591 1021,590 1041,583', '#2f8fb4');
      line(g, '127,591 137,592 147,594 167,596 187,602 213,606 240,610 260,615 293,623 323,624 333,622 353,609 373,598 400,586 427,581 447,584 468,593 507,602 537,604 573,605 603,612 633,614 670,610 700,608 720,607 749,622 777,629 809,630 818,629 846,615 876,607 905,603 926,596 954,591 973,584 998,579 1041,584', '#c04060');
    }
  }
};

document.querySelectorAll('.chart').forEach(fig => {
  const c = charts[fig.dataset.chart];
  const g = add(fig.querySelector('.plot'), 'g', { transform: `translate(${-LEFT} ${-c.top - 1})` });
  MONTHS.forEach(x => add(g, 'rect', { x, y: c.top, width: 1, height: c.height, fill: '#383838' }));
  c.scale.forEach(([label, y]) => {
    add(g, 'rect', { x: LEFT, y, width: 4000, height: 1, fill: '#2c2c2c' });
    add(fig.querySelector('.scale'), 'text', { x: 2, y: y - c.top + 5 }, label);
  });
  c.draw(g);
});

const dates = document.querySelector('.dates');
[['2017/09/07', 122, 'start'], ['10', 302, 'middle'], ['11', 487, 'middle'], ['12', 700, 'middle'], ['2018/01', 905, 'middle']].forEach(([label, x, anchor], i) => {
  add(dates, 'rect', { x: MONTHS[i] - LEFT + 1, y: 0, width: 1, height: 5, fill: '#a0a000' });
  add(dates, 'text', { x: x - LEFT + 1, y: 18, 'text-anchor': anchor, class: i < 4 ? 'thin' : '' }, label);
});
```
